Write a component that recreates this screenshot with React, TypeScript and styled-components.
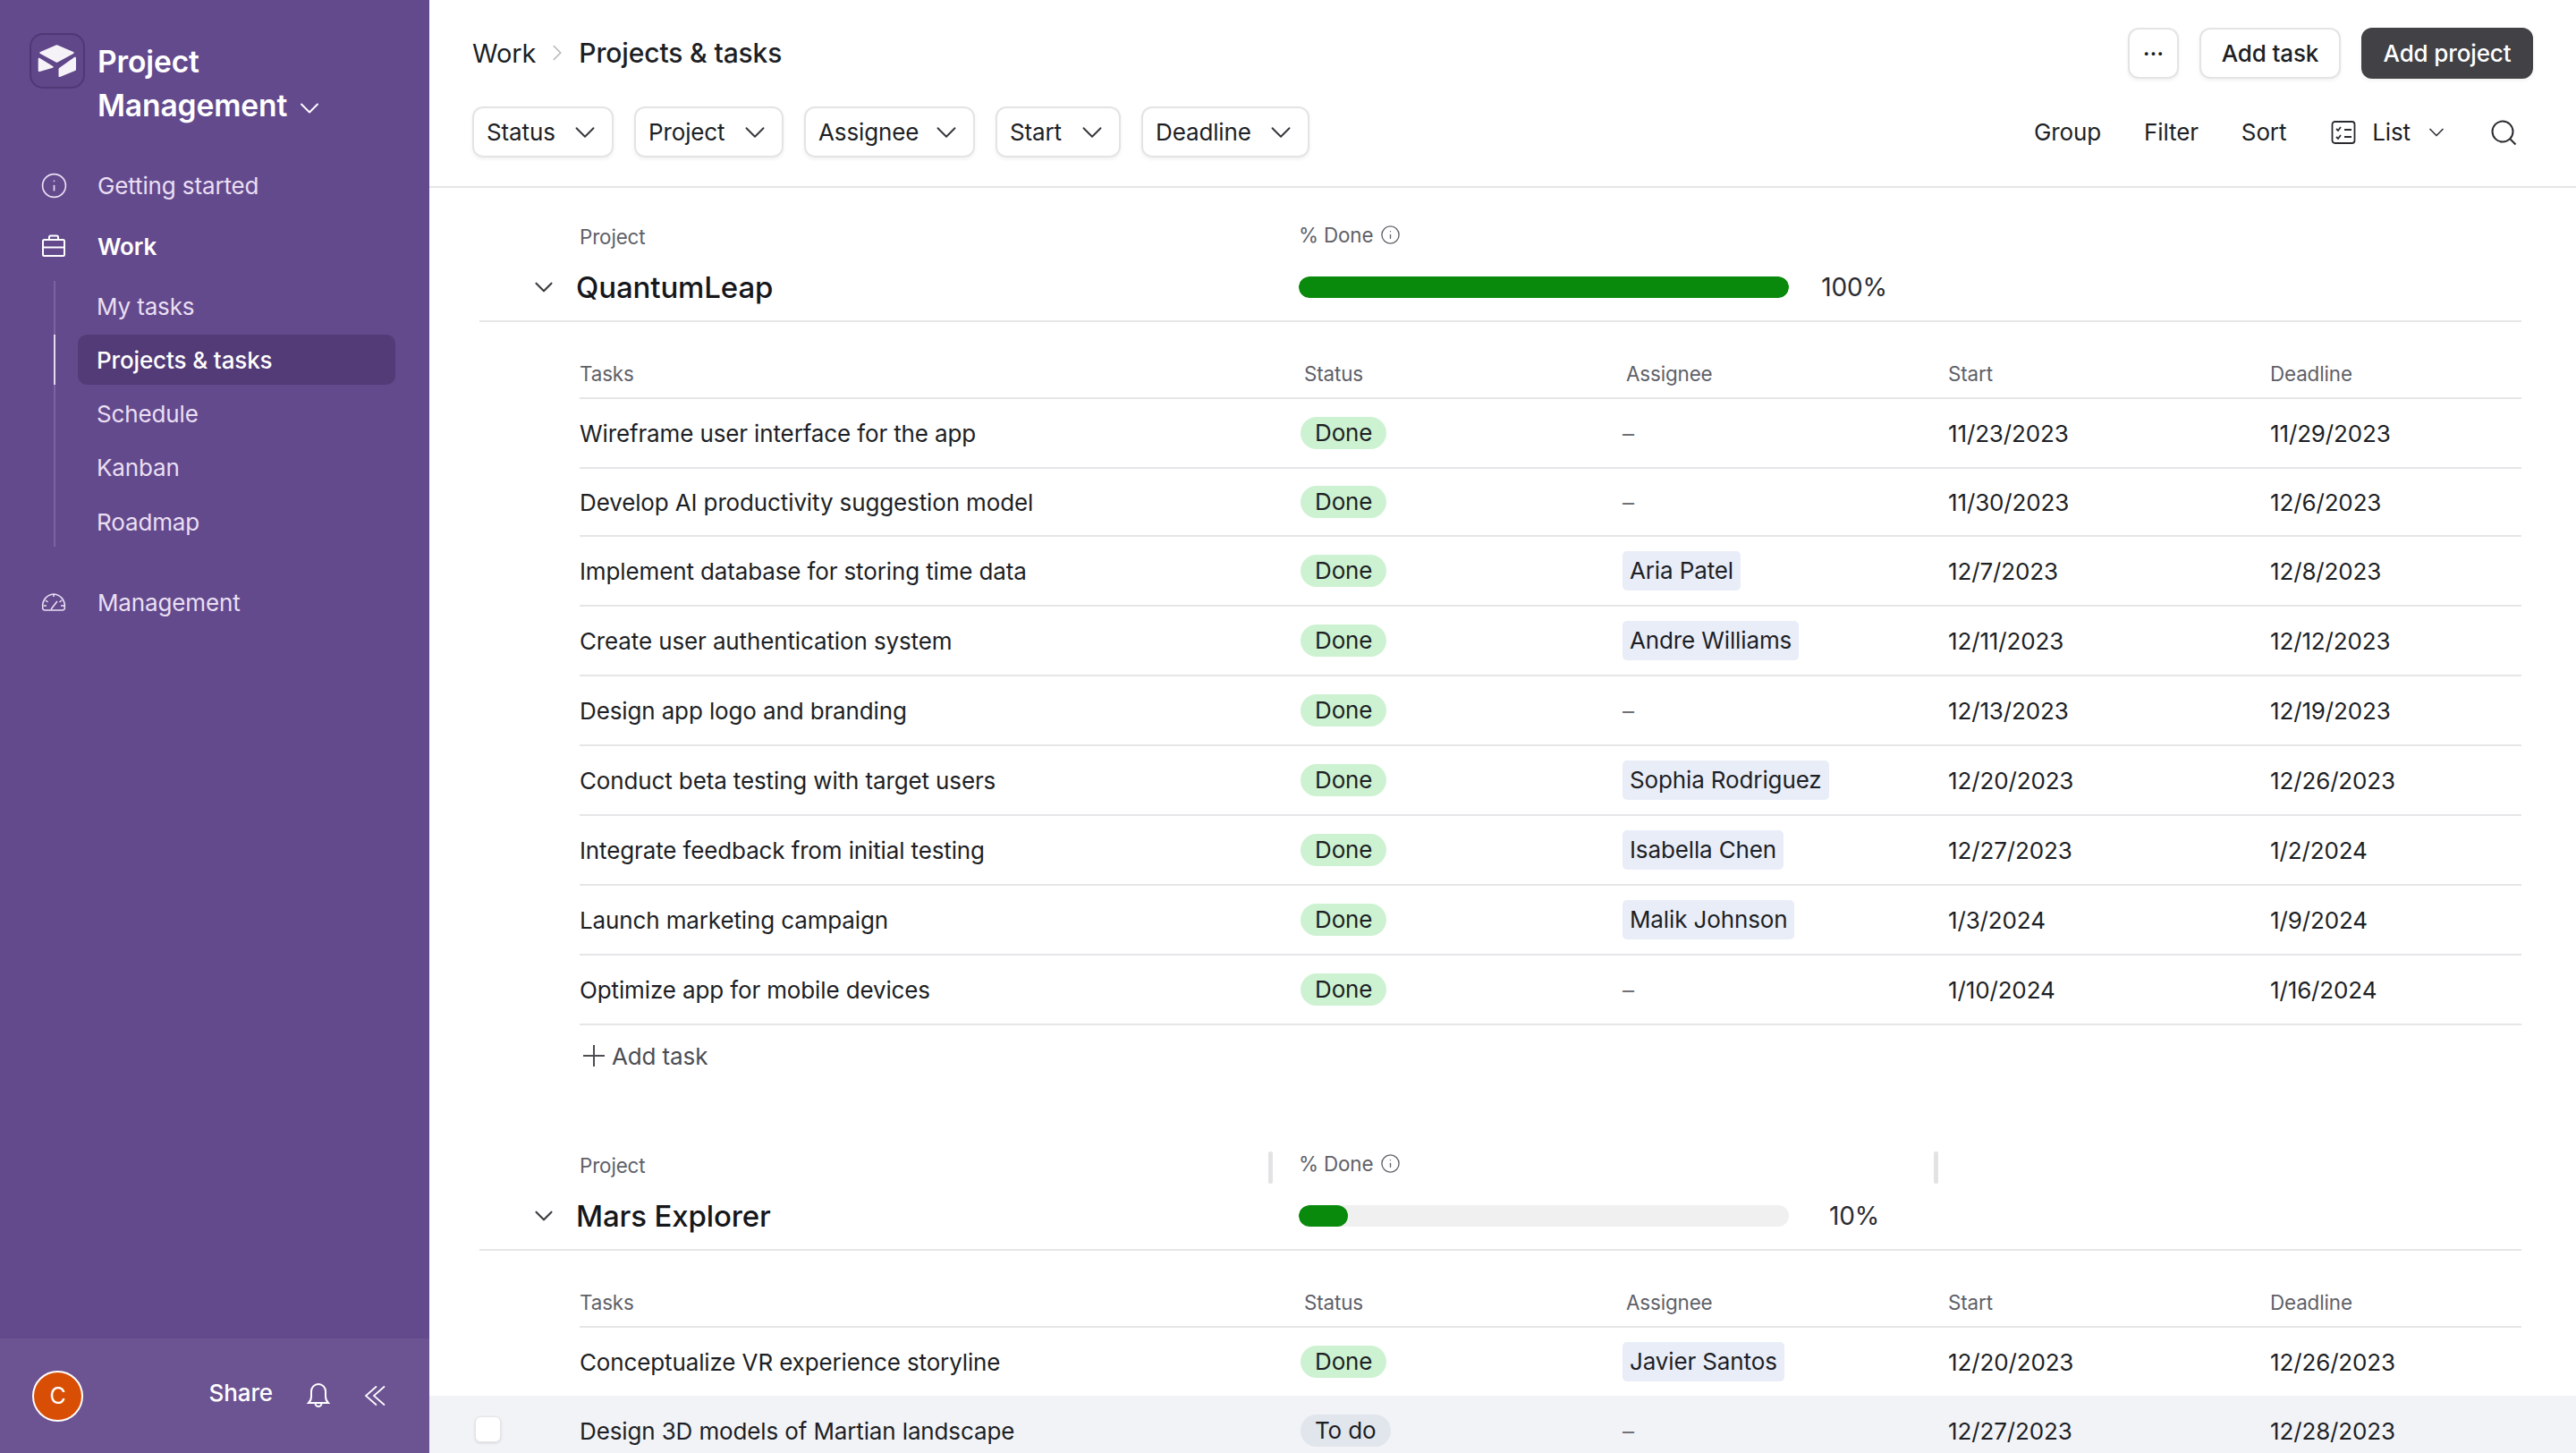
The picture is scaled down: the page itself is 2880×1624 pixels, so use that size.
import styled, { createGlobalStyle } from 'styled-components';
import { ChevronDown, ChevronRight, Info } from 'lucide-react';

const GlobalStyle = createGlobalStyle`
  html, body {
    margin: 0;
    padding: 0;
    background: #fff;
  }
  body {
    font-family: Inter, "Liberation Sans", sans-serif;
    font-size: 26px;
    letter-spacing: -0.13px;
    color: #1d1f25;
  }
  * {
    box-sizing: border-box;
  }
`;

const Page = styled.div`
  display: flex;
  width: 2880px;
  height: 1624px;
  overflow: hidden;
`;

const Sidebar = styled.aside`
  display: flex;
  flex-direction: column;
  flex: 0 0 480px;
  background: #634a8d;
  color: #eadff3;
`;

const Brand = styled.div`
  display: flex;
  align-items: flex-start;
  gap: 14px;
  padding: 37px 0 0 33px;
`;

const LogoBox = styled.div`
  flex: 0 0 62px;
  height: 62px;
  border-radius: 15px;
  border: 2px solid #4e3875;
  background: #5f4789;
`;

const BrandName = styled.div`
  width: 300px;
  padding-top: 7px;
  font-size: 33.6px;
  line-height: 49px;
  font-weight: 600;
  color: #fff;
`;

const BrandChevron = styled(ChevronDown)`
  margin-left: 7px;
  vertical-align: -9px;
`;

const Nav = styled.nav`
  flex: 1;
  padding-top: 35px;
`;

const NavItem = styled.div<{ $active?: boolean; $gap?: number }>`
  display: flex;
  align-items: center;
  gap: 35px;
  height: 60px;
  margin-top: ${p => p.$gap ?? 0}px;
  padding-left: 46px;
  color: ${p => (p.$active ? '#fff' : '#eadff3')};
  font-weight: ${p => (p.$active ? 600 : 400)};
`;

const NavInfo = styled(Info)`
  margin: 0 -1.5px;
`;

const SubNav = styled.div`
  margin: 9px 0 0 60px;
  padding: 0 38px 0 0;
  border-left: 2px solid #7b659f;
`;

const SubItem = styled.div<{ $active?: boolean }>`
  position: relative;
  display: flex;
  align-items: center;
  height: 56px;
  margin: 0 0 4.3px 25px;
  padding-left: 21px;
  border-radius: 10px;
  background: ${p => (p.$active ? '#523b77' : 'transparent')};
  color: ${p => (p.$active ? '#fff' : '#eadff3')};
  font-weight: ${p => (p.$active ? 500 : 400)};

  ${p =>
    p.$active &&
    `&::before {
      content: "";
      position: absolute;
      left: -27px;
      top: 0;
      bottom: 0;
      width: 2px;
      background: #e4dcef;
    }`}
`;

const SidebarFooter = styled.div`
  display: flex;
  align-items: center;
  height: 128px;
  padding: 0 49px 0 36px;
  background: #6c5392;
`;

const Avatar = styled.div`
  display: flex;
  align-items: center;
  justify-content: center;
  width: 57px;
  height: 57px;
  margin-right: auto;
  border-radius: 50%;
  border: 2px solid #fff;
  background: #d84e05;
  color: #fff;
  font-size: 25px;
`;

const ShareText = styled.span`
  margin: 0 38px 8px 0;
  color: #fff;
  font-weight: 500;
`;

const BellIcon = styled.svg`
  margin: 0 38px 0 0;
`;

const Main = styled.main`
  flex: 1;
  min-width: 0;
  overflow: hidden;
`;

const TopBar = styled.header`
  height: 210px;
  padding: 30px 48px 0;
  border-bottom: 2px solid #e6e6e8;
`;

const TopRow = styled.div`
  display: flex;
  align-items: center;
  justify-content: space-between;
  height: 58px;
`;

const Crumbs = styled.div`
  display: flex;
  align-items: center;
  gap: 9px;
  font-size: 29px;
`;

const CrumbCurrent = styled.span`
  font-size: 30px;
  font-weight: 500;
`;

const Actions = styled.div`
  display: flex;
  align-items: center;
  gap: 23px;
`;

const Button = styled.button<{ $primary?: boolean; $width: number }>`
  width: ${p => p.$width}px;
  height: 57px;
  padding: 0;
  border-radius: 12px;
  border: 2px solid ${p => (p.$primary ? '#414146' : '#e4e4e6')};
  background: ${p => (p.$primary ? '#414146' : '#fff')};
  color: ${p => (p.$primary ? '#fff' : '#1d1f25')};
  box-shadow: 0 2px 4px rgba(0, 0, 0, 0.06);
  font: 500 26px Inter, sans-serif;
  letter-spacing: -0.13px;
`;

const FilterRow = styled.div`
  display: flex;
  align-items: center;
  justify-content: space-between;
  margin-top: 31px;
`;

const Filters = styled.div`
  display: flex;
  gap: 23px;
`;

const FilterChip = styled.div<{ $width: number }>`
  display: flex;
  align-items: center;
  justify-content: space-between;
  width: ${p => p.$width}px;
  height: 57px;
  padding: 0 11px 0 14px;
  border: 2px solid #e4e4e6;
  border-radius: 12px;
  box-shadow: 0 2px 4px rgba(0, 0, 0, 0.06);
`;

const ViewTools = styled.div`
  display: flex;
  align-items: center;
  margin-right: 18px;
`;

const ToolText = styled.span<{ $space: number }>`
  margin-right: ${p => p.$space}px;
`;

const ListChevron = styled(ChevronDown)`
  margin: 0 46px 0 15px;
`;

const ListIcon = styled.svg`
  margin-right: 18px;
`;

const SectionSpacer = styled.div<{ $height: number }>`
  height: ${p => p.$height}px;
`;

const Section = styled.section<{ $bottom?: number }>`
  padding-bottom: ${p => p.$bottom ?? 0}px;
`;

const ProjectHead = styled.div`
  margin: 0 61px 0 56px;
  border-bottom: 2px solid #e6e6e8;
`;

const HeadGrid = styled.div<{ $height: number }>`
  position: relative;
  display: grid;
  grid-template-columns: 916px 1fr;
  align-items: center;
  height: ${p => p.$height}px;
`;

const ProjectLabel = styled.span`
  padding-left: 112px;
  font-size: 22.4px;
  color: #5f6168;
`;

const DoneLabel = styled.span`
  display: flex;
  align-items: center;
  gap: 8px;
  margin-top: -4px;
  font-size: 22.4px;
  color: #5f6168;
`;

const ResizeHandle = styled.i<{ $left: number }>`
  position: absolute;
  left: ${p => p.$left}px;
  top: 5px;
  width: 5px;
  height: 36px;
  border-radius: 2px;
  background: #e3e3e5;
`;

const TitleCell = styled.div`
  display: flex;
  align-items: center;
  gap: 19px;
  padding-left: 55px;
`;

const ProjectTitle = styled.h2`
  margin: 0;
  font-size: 33px;
  line-height: 48px;
  font-weight: 500;
  color: #16171b;
`;

const ProgressCell = styled.div`
  display: flex;
  align-items: center;
`;

const ProgressTrack = styled.div`
  width: 548px;
  height: 24px;
  border-radius: 12px;
  background: #f0f0f1;
  overflow: hidden;
`;

const ProgressFill = styled.div`
  height: 100%;
  border-radius: 12px;
  background: #0a8a0c;
`;

const ProgressValue = styled.span`
  width: 146px;
  font-size: 28px;
  text-align: center;
  color: #2a2b30;
`;

const RowWrap = styled.div<{ $hover?: boolean }>`
  position: relative;
  padding: 0 61px 0 168px;
  background: ${p => (p.$hover ? '#f2f3f7' : 'transparent')};
`;

const Grid = styled.div<{ $height: number; $line?: boolean }>`
  display: grid;
  grid-template-columns: 806px 360px 360px 360px 1fr;
  align-items: center;
  height: ${p => p.$height}px;
  border-bottom: ${p => (p.$line ? '2px solid #e6e6e8' : 'none')};
`;

const HeadGridRow = styled(Grid)`
  align-items: end;
  padding-bottom: 12px;
`;

const ColLabel = styled.span<{ $inset?: boolean }>`
  padding-left: ${p => (p.$inset ? 4 : 0)}px;
  font-size: 22.4px;
  line-height: 28px;
  color: #5f6168;
`;

const Cell = styled.span`
  padding-left: 4px;
`;

const TaskName = styled.span`
  color: #1d1f25;
`;

const StatusPill = styled.span<{ $todo?: boolean }>`
  justify-self: start;
  height: 36px;
  padding: 0 16px;
  border-radius: 18px;
  background: ${p => (p.$todo ? '#e1e5ec' : '#cdf2d1')};
  line-height: 36px;
`;

const AssigneeChip = styled.span`
  justify-self: start;
  height: 44px;
  padding: 0 8px;
  border-radius: 5px;
  background: #e9edf8;
  line-height: 44px;
`;

const Dash = styled.span`
  color: #707177;
`;

const AddTask = styled.div`
  display: flex;
  align-items: center;
  gap: 8px;
  height: 68px;
  margin-left: 172px;
  color: #4c4d53;
`;

const RowCheckbox = styled.span`
  position: absolute;
  left: 51px;
  top: 23px;
  width: 29px;
  height: 29px;
  border-radius: 6px;
  border: 1px solid #e4e4e8;
  background: #fff;
  box-shadow: 0 1px 3px rgba(0, 0, 0, 0.12);
`;

type Task = {
  name: string;
  status?: 'Done' | 'To do';
  assignee?: string;
  start: string;
  end: string;
  height?: number;
};

const quantumTasks: Task[] = [
  { name: 'Wireframe user interface for the app', start: '11/23/2023', end: '11/29/2023' },
  { name: 'Develop AI productivity suggestion model', start: '11/30/2023', end: '12/6/2023', height: 76 },
  { name: 'Implement database for storing time data', assignee: 'Aria Patel', start: '12/7/2023', end: '12/8/2023' },
  { name: 'Create user authentication system', assignee: 'Andre Williams', start: '12/11/2023', end: '12/12/2023' },
  { name: 'Design app logo and branding', start: '12/13/2023', end: '12/19/2023' },
  { name: 'Conduct beta testing with target users', assignee: 'Sophia Rodriguez', start: '12/20/2023', end: '12/26/2023' },
  { name: 'Integrate feedback from initial testing', assignee: 'Isabella Chen', start: '12/27/2023', end: '1/2/2024' },
  { name: 'Launch marketing campaign', assignee: 'Malik Johnson', start: '1/3/2024', end: '1/9/2024' },
  { name: 'Optimize app for mobile devices', start: '1/10/2024', end: '1/16/2024' },
];

const filters = [
  { label: 'Status', width: 158 },
  { label: 'Project', width: 167 },
  { label: 'Assignee', width: 191 },
  { label: 'Start', width: 140 },
  { label: 'Deadline', width: 188 },
];

function TaskHead() {
  return (
    <RowWrap>
      <HeadGridRow $height={86} $line>
        <ColLabel>Tasks</ColLabel>
        <ColLabel $inset>Status</ColLabel>
        <ColLabel $inset>Assignee</ColLabel>
        <ColLabel $inset>Start</ColLabel>
        <ColLabel $inset>Deadline</ColLabel>
      </HeadGridRow>
    </RowWrap>
  );
}

function TaskRow({ task, line = true, hover = false }: { task: Task; line?: boolean; hover?: boolean }) {
  return (
    <RowWrap $hover={hover}>
      {hover && <RowCheckbox />}
      <Grid $height={task.height ?? 78} $line={line}>
        <TaskName>{task.name}</TaskName>
        <StatusPill $todo={task.status === 'To do'}>{task.status ?? 'Done'}</StatusPill>
        {task.assignee ? <AssigneeChip>{task.assignee}</AssigneeChip> : <Dash>–</Dash>}
        <Cell>{task.start}</Cell>
        <Cell>{task.end}</Cell>
      </Grid>
    </RowWrap>
  );
}

function ProjectHeader({ title, percent, handles }: { title: string; percent: number; handles?: boolean }) {
  return (
    <ProjectHead>
      <HeadGrid $height={40}>
        <ProjectLabel>Project</ProjectLabel>
        <DoneLabel>
          % Done <Info size={23} strokeWidth={1.4} color="#5f6168" />
        </DoneLabel>
        {handles && <ResizeHandle $left={882} />}
        {handles && <ResizeHandle $left={1626} />}
      </HeadGrid>
      <HeadGrid $height={74}>
        <TitleCell>
          <ChevronDown size={34} strokeWidth={1.5} color="#3b3c42" />
          <ProjectTitle>{title}</ProjectTitle>
        </TitleCell>
        <ProgressCell>
          <ProgressTrack>
            <ProgressFill style={{ width: `${percent}%` }} />
          </ProgressTrack>
          <ProgressValue>{percent}%</ProgressValue>
        </ProgressCell>
      </HeadGrid>
    </ProjectHead>
  );
}

export default function App() {
  return (
    <Page>
      <GlobalStyle />
      <Sidebar>
        <Brand>
          <LogoBox>
            <svg width="58" height="58" viewBox="2 2 58 58" fill="#f6f3f8">
              <path d="M29.500 13.500a3 3 0 0 1 2 0L49 21c1 .5 1 1.500 0 2l-17.500 9.500a3 3 0 0 1-2 0L12 23c-1-.5-1-1.500 0-2z" />
              <path d="M9.700 29c0-1.200 1-1.500 1.800-1l14.600 9c.8.5.8 1.400 0 1.800L11.500 43c-1 .4-1.800-.2-1.800-1.200z" />
              <path d="M32.500 40.500c0-.8.3-1.300 1-1.700L50 27c1-.5 2 0 2 1v12.500c0 .8-.3 1.300-1 1.500L34 49c-1 .3-1.500-.2-1.500-1z" />
            </svg>
          </LogoBox>
          <BrandName>
            Project Management
            <BrandChevron size={36} strokeWidth={1.3} />
          </BrandName>
        </Brand>
        <Nav>
          <NavItem>
            <NavInfo size={31} strokeWidth={1.3} />
            Getting started
          </NavItem>
          <NavItem $active $gap={8}>
            <svg width="28" height="28" viewBox="0 0 28 28" fill="none" stroke="#fff" strokeWidth="2">
              <rect x="2" y="7" width="24" height="18" rx="1.500" />
              <path d="M9 7V4a1.500 1.500 0 0 1 1.500-1.500h7A1.500 1.500 0 0 1 19 4v3M2 15.500h24" />
            </svg>
            Work
          </NavItem>
          <SubNav>
            <SubItem>My tasks</SubItem>
            <SubItem $active>Projects &amp; tasks</SubItem>
            <SubItem>Schedule</SubItem>
            <SubItem>Kanban</SubItem>
            <SubItem>Roadmap</SubItem>
          </SubNav>
          <NavItem $gap={32}>
            <svg width="28" height="28" viewBox="0 0 28 28" fill="none" stroke="#eadff3" strokeWidth="1.600">
              <path d="M4 23h20a2.500 2.500 0 0 0 2.200-3.500A13 13 0 0 0 14 5 13 13 0 0 0 1.800 19.500 2.500 2.500 0 0 0 4 23z" />
              <path d="M14 5v3M5 12l2.500 2M23 12l-2.500 2M11 22l7-9M3 18h3M22 18h4" />
            </svg>
            Management
          </NavItem>
        </Nav>
        <SidebarFooter>
          <Avatar>C</Avatar>
          <ShareText>Share</ShareText>
          <BellIcon width="26" height="30" viewBox="0 0 26 30" fill="none" stroke="#fff" strokeWidth="2">
            <path d="M2 23h22c-2-2-3-3.500-3-7v-6a8 8 0 0 0-16 0v6c0 3.500-1 5-3 7z" />
            <path d="M9.500 23.500a3.500 3.500 0 0 0 7 0" />
          </BellIcon>
          <svg width="24" height="24" viewBox="0 0 24 24" fill="none" stroke="#fff" strokeWidth="1.700">
            <path d="M14 1.500L2 12l12 10.500M23 1.500L11 12l12 10.500" />
          </svg>
        </SidebarFooter>
      </Sidebar>
      <Main>
        <TopBar>
          <TopRow>
            <Crumbs>
              <span>Work</span>
              <ChevronRight size={30} strokeWidth={1.300} color="#b5b6ba" />
              <CrumbCurrent>Projects &amp; tasks</CrumbCurrent>
            </Crumbs>
            <Actions>
              <Button $width={57}>···</Button>
              <Button $width={158}>Add task</Button>
              <Button $primary $width={192}>Add project</Button>
            </Actions>
          </TopRow>
          <FilterRow>
            <Filters>
              {filters.map(f => (
                <FilterChip key={f.label} $width={f.width}>
                  {f.label}
                  <ChevronDown size={38} strokeWidth={1.2} color="#35363b" />
                </FilterChip>
              ))}
            </Filters>
            <ViewTools>
              <ToolText $space={48}>Group</ToolText>
              <ToolText $space={48}>Filter</ToolText>
              <ToolText $space={50}>Sort</ToolText>
              <ListIcon width="28" height="28" viewBox="0 0 28 28" fill="none" stroke="#2a2b30" strokeWidth="1.800">
                <rect x="1.500" y="2" width="25" height="24" rx="3" />
                <path d="M6 10l2 2 3-4M6 19l2 2 3-4M15 11h8M15 19h8" />
              </ListIcon>
              <span>List</span>
              <ListChevron size={28} strokeWidth={1.500} color="#35363b" />
              <svg width="30" height="30" viewBox="0 0 30 30" fill="none" stroke="#2a2b30" strokeWidth="2">
                <circle cx="14" cy="14" r="11.500" />
                <path d="M22.500 22.500l6 6" />
              </svg>
            </ViewTools>
          </FilterRow>
        </TopBar>

        <Section $bottom={31}>
          <SectionSpacer $height={34} />
          <ProjectHeader title="QuantumLeap" percent={100} />
          <TaskHead />
          {quantumTasks.map(task => (
            <TaskRow key={task.name} task={task} />
          ))}
          <AddTask>
            <svg width="24" height="24" viewBox="0 0 24 24" fill="none" stroke="#4c4d53" strokeWidth="2">
              <path d="M12 0v24M0 12h24" />
            </svg>
            Add task
          </AddTask>
        </Section>

        <Section>
          <SectionSpacer $height={37} />
          <ProjectHeader title="Mars Explorer" percent={10} handles />
          <TaskHead />
          <TaskRow
            task={{ name: 'Conceptualize VR experience storyline', assignee: 'Javier Santos', start: '12/20/2023', end: '12/26/2023', height: 76 }}
            line={false}
          />
          <TaskRow
            task={{ name: 'Design 3D models of Martian landscape', status: 'To do', start: '12/27/2023', end: '12/28/2023' }}
            line={false}
            hover
          />
        </Section>
      </Main>
    </Page>
  );
}
